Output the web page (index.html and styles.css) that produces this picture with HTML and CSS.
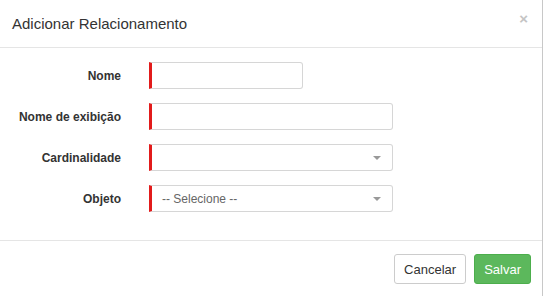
FILE: index.html
```html
<!DOCTYPE html>
<html lang="pt-BR">
<head>
  <meta charset="UTF-8">
  <title>Adicionar Relacionamento</title>
  <meta name="viewport" content="width=device-width, initial-scale=1.0">
  <link rel="stylesheet" href="styles.css">
</head>
<body>
  <div class="modal-content">
    <div class="modal-header">
      <h4 class="modal-title">Adicionar Relacionamento</h4>
      <span class="close">&times;</span>
    </div>

    <form class="modal-body">
      <div class="form-row">
        <label class="form-label">Nome</label>
        <input type="text" class="form-control required short">
      </div>
      <div class="form-row">
        <label class="form-label">Nome de exibição</label>
        <input type="text" class="form-control required">
      </div>
      <div class="form-row">
        <label class="form-label">Cardinalidade</label>
        <div class="form-control required select">
          <span class="select-text"></span>
          <span class="caret"></span>
        </div>
      </div>
      <div class="form-row">
        <label class="form-label">Objeto</label>
        <div class="form-control required select">
          <span class="select-text">-- Selecione --</span>
          <span class="caret"></span>
        </div>
      </div>
    </form>

    <div class="modal-footer">
      <button class="btn btn-default">Cancelar</button>
      <button class="btn btn-success">Salvar</button>
    </div>
  </div>
</body>
</html>
```

FILE: styles.css
```css
html, body {
  margin: 0;
  padding: 0;
  background-color: #fff;
  color: #333;
  font-family: 'Liberation Sans', Arial, sans-serif;
}

.modal-content {
  width: 542px;
  height: 296px;
  border-right: 1px solid #c8c8c8;
  background-color: #fff;
}

/* En-tête */
.modal-header {
  height: 47px;
  border-bottom: 1px solid #e5e5e5;
  display: flex;
  align-items: center;
  justify-content: space-between;
  padding: 0 12px 0 12px;
}

.modal-title {
  margin: 0;
  font-size: 15px;
  font-weight: normal;
  color: #333;
  line-height: 17px;
  margin-top: -1px;
}

.close {
  color: #c4c4c4;
  font-size: 15px;
  font-weight: bold;
  line-height: 1;
  margin-top: -10px;
  margin-right: 2px;
  cursor: pointer;
}

/* Corps */
.modal-body {
  margin: 0;
  padding: 14px 0 28px 0;
  display: flex;
  flex-direction: column;
  gap: 14px;
}

.form-row {
  display: flex;
  align-items: center;
  height: 27px;
}

.form-label {
  width: 121px;
  margin-right: 28px;
  text-align: right;
  font-size: 12px;
  font-weight: bold;
  color: #333;
}

.form-control {
  box-sizing: border-box;
  width: 244px;
  height: 27px;
  border: 1px solid #d6d6d6;
  border-radius: 3px;
  background-color: #fff;
  padding: 0 10px;
  font-family: inherit;
  font-size: 12px;
  color: #555;
  outline: none;
}

.form-control.short {
  width: 154px;
}

.form-control.required {
  border-left: 3px solid #e21b1b;
  border-top-left-radius: 0;
  border-bottom-left-radius: 0;
}

.select {
  display: flex;
  align-items: center;
  justify-content: space-between;
  padding: 0 11px 0 10px;
}

.select-text {
  color: #666;
  font-size: 12px;
}

.caret {
  width: 0;
  height: 0;
  border-left: 4px solid transparent;
  border-right: 4px solid transparent;
  border-top: 4px solid #999;
}

/* Pied */
.modal-footer {
  border-top: 1px solid #e5e5e5;
  padding: 13px 11px 0 0;
  display: flex;
  justify-content: flex-end;
  gap: 8px;
}

.btn {
  height: 30px;
  padding: 0 9px;
  font-family: inherit;
  font-size: 13px;
  border-radius: 3px;
  cursor: pointer;
}

.btn-default {
  background-color: #fff;
  border: 1px solid #ccc;
  color: #333;
}

.btn-success {
  background-color: #5cb85c;
  border: 1px solid #4cae4c;
  color: #fff;
}
```
